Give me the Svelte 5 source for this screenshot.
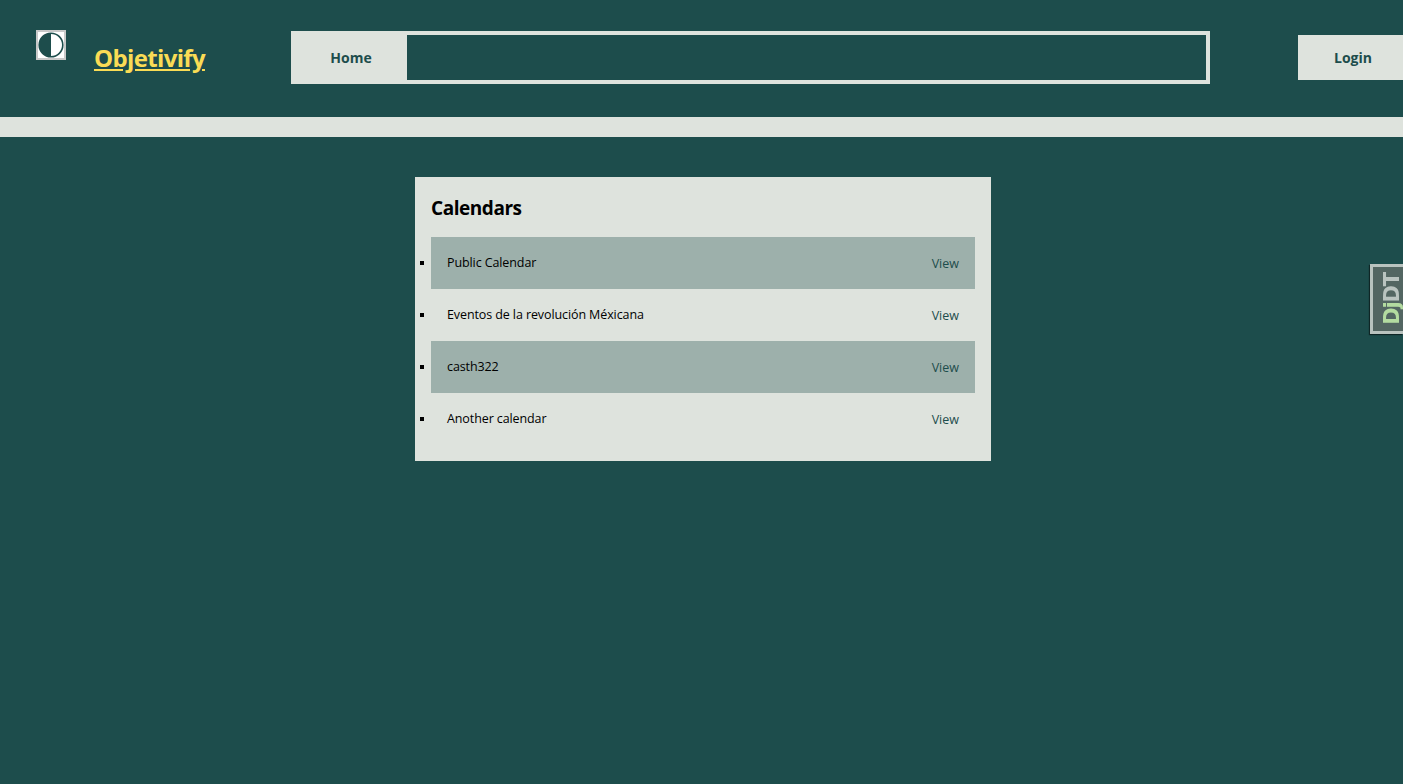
<script>
    const calendars = ["Public Calendar", "Eventos de la revolución Méxicana", "casth322", "Another calendar"];
</script>

<header class="top">
    <a class="logo" href="#home" aria-label="Objetivify logo">
        <svg viewBox="0 0 26 26" width="26" height="26">
            <circle cx="13" cy="13" r="11.8" fill="#fff" stroke="#1d4d4c" stroke-width="1.6" />
            <path d="M13 1.2a11.8 11.8 0 0 0 0 23.6z" fill="#1d4d4c" />
        </svg>
    </a>
    <a class="brand" href="#home">Objetivify</a>
    <nav class="nav">
        <a class="nav-item" href="#home">Home</a>
    </nav>
    <a class="login" href="#login">Login</a>
</header>
<div class="strip"></div>

<main class="content">
    <section class="panel">
        <h2>Calendars</h2>
        <ul>
            {#each calendars as name}
                <li>
                    <span class="name">{name}</span>
                    <a class="view" href="#view">View</a>
                </li>
            {/each}
        </ul>
    </section>
</main>

<div class="djdt"><span><b>Dj</b>DT</span></div>

<style>
    :global(body) {
        background-color: #1d4d4c;
        font-family: "Open Sans", "Noto Sans", sans-serif;
        min-height: 784px;
        overflow: hidden;
    }

    .top {
        height: 117px;
        display: flex;
        align-items: flex-start;
    }

    .logo {
        flex: none;
        box-sizing: border-box;
        width: 30px;
        height: 30px;
        margin: 30px 0 0 36px;
        background: #fff;
        border: 2px solid #c9c9c9;
        display: flex;
    }

    .brand {
        flex: none;
        margin: 39px 0 0 28px;
        width: 197px;
        font-size: 24px;
        line-height: 38px;
        font-weight: 700;
        letter-spacing: -0.65px;
        color: #fadc55;
    }

    .nav {
        flex: none;
        box-sizing: border-box;
        margin-top: 31px;
        width: 919px;
        height: 53px;
        border: 4px solid #dee3dd;
        display: flex;
    }

    .nav-item, .login {
        background: #dee3dd;
        color: #1d4d4c;
        font-size: 14px;
        font-weight: 700;
        text-decoration: none;
        display: flex;
        align-items: center;
        justify-content: center;
    }

    .nav-item {
        width: 112px;
    }

    .login {
        flex: none;
        margin: 35px 0 0 88px;
        width: 110px;
        height: 45px;
    }

    .strip {
        height: 20px;
        background: #dee3dd;
    }

    .content {
        display: flex;
        justify-content: center;
        padding: 40px 0 0 3px;
    }

    .panel {
        box-sizing: border-box;
        width: 576px;
        height: 284px;
        padding: 16px;
        background: #dee3dd;
        color: #000;
    }

    h2 {
        margin: 0 0 13px;
        font-size: 19px;
        line-height: 31px;
        font-weight: 700;
        letter-spacing: -0.45px;
    }

    ul {
        margin: 0;
        padding: 0;
        list-style: none;
    }

    li {
        position: relative;
        height: 52px;
        padding: 0 16px;
        display: flex;
        justify-content: space-between;
        font-size: 12.5px;
        line-height: 52px;
    }

    /* square bullet sits out in the panel padding */
    li::before {
        content: "";
        position: absolute;
        left: -11px;
        top: 24px;
        width: 4px;
        height: 4px;
        background: #000;
    }

    li:nth-child(odd) {
        background: #9db0ab;
    }

    .name {
        letter-spacing: -0.1px;
    }

    .view {
        line-height: 53px;
        color: #1d4d4c;
        text-decoration: none;
    }

    .djdt {
        box-sizing: border-box;
        position: fixed;
        top: 264px;
        right: 0;
        width: 33px;
        height: 70px;
        padding-left: 7px;
        background: #536662;
        border: 3px solid #b9c3bf;
        border-right: 0;
        box-shadow: -1px 1px 1px rgba(0, 0, 0, 0.5);
        display: flex;
        align-items: center;
        justify-content: center;
    }

    .djdt span {
        transform: rotate(-90deg);
        font-family: "DejaVu Sans", sans-serif;
        font-size: 21px;
        font-weight: 700;
        letter-spacing: -1.2px;
        color: #b9c3bf;
        white-space: nowrap;
    }

    .djdt b {
        color: #b3dba0;
    }
</style>
